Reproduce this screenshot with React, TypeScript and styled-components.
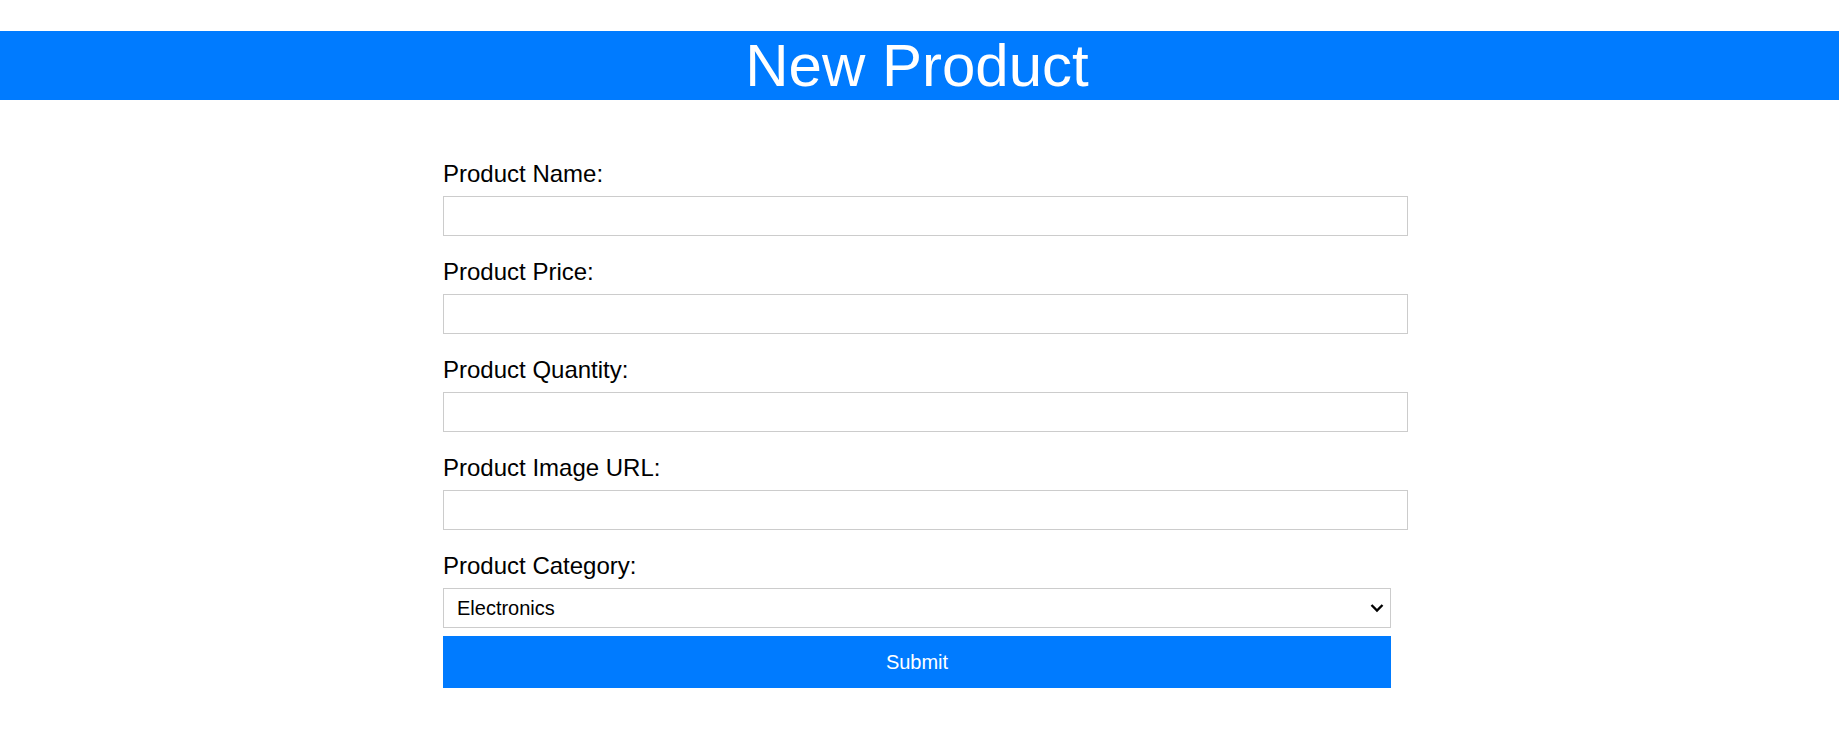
import React from "react";
import styled, { createGlobalStyle } from "styled-components";

const GlobalStyle = createGlobalStyle`
  body {
    margin: 0;
    background: #fff;
    font-family: "Liberation Sans", Arial, sans-serif;
    color: #000;
  }
`;

const Header = styled.h1`
  margin: 31px 0 0;
  padding-right: 5px;
  background: #007bff;
  color: #fff;
  text-align: center;
  font-size: 60px;
  font-weight: normal;
  line-height: 69px;
`;

const Form = styled.form`
  width: 948px;
  margin: 60px 0 0 443px;
  display: flex;
  flex-direction: column;
`;

const Field = styled.div<{ last?: boolean }>`
  display: flex;
  flex-direction: column;
  margin-bottom: ${({ last }) => (last ? "8px" : "22px")};
`;

const Label = styled.label`
  font-size: 24px;
  line-height: 28px;
  margin-bottom: 8px;
`;

const Input = styled.input`
  box-sizing: border-box;
  width: calc(100% + 17px);
  height: 40px;
  padding: 9px 8px;
  border: 1px solid #ccc;
  margin: 0;
  font-family: inherit;
  font-size: 16px;
  outline: none;
`;

const SelectWrap = styled.div`
  position: relative;
  width: 100%;
`;

const Select = styled.select`
  appearance: none;
  box-sizing: border-box;
  width: 100%;
  height: 40px;
  padding: 0 30px 0 13px;
  margin: 0;
  border: 1px solid #ccc;
  border-radius: 0;
  background: #fff;
  color: #000;
  font-family: inherit;
  font-size: 20px;
  outline: none;
`;

const Chevron = styled.svg`
  position: absolute;
  right: 7px;
  top: 15px;
  pointer-events: none;
`;

const Button = styled.button`
  height: 52px;
  width: 100%;
  border: none;
  background: #007bff;
  color: #fff;
  font-family: inherit;
  font-size: 20px;
  cursor: pointer;
`;

const fields = ["Product Name:", "Product Price:", "Product Quantity:", "Product Image URL:"];

const App: React.FC = () => {
  return (
    <>
      <GlobalStyle />
      <Header>New Product</Header>
      <Form onSubmit={(e) => e.preventDefault()}>
        {fields.map((f) => (
          <Field key={f}>
            <Label>{f}</Label>
            <Input type="text" />
          </Field>
        ))}
        <Field last>
          <Label>Product Category:</Label>
          <SelectWrap>
            <Select defaultValue="Electronics">
              <option>Electronics</option>
              <option>Clothing</option>
              <option>Books</option>
              <option>Home</option>
            </Select>
            <Chevron width="14" height="10" viewBox="0 0 14 10">
              <path d="M1.5 2 L7 7.5 L12.5 2" fill="none" stroke="#000" strokeWidth="2.4" />
            </Chevron>
          </SelectWrap>
        </Field>
        <Button type="submit">Submit</Button>
      </Form>
    </>
  );
};

export default App;
